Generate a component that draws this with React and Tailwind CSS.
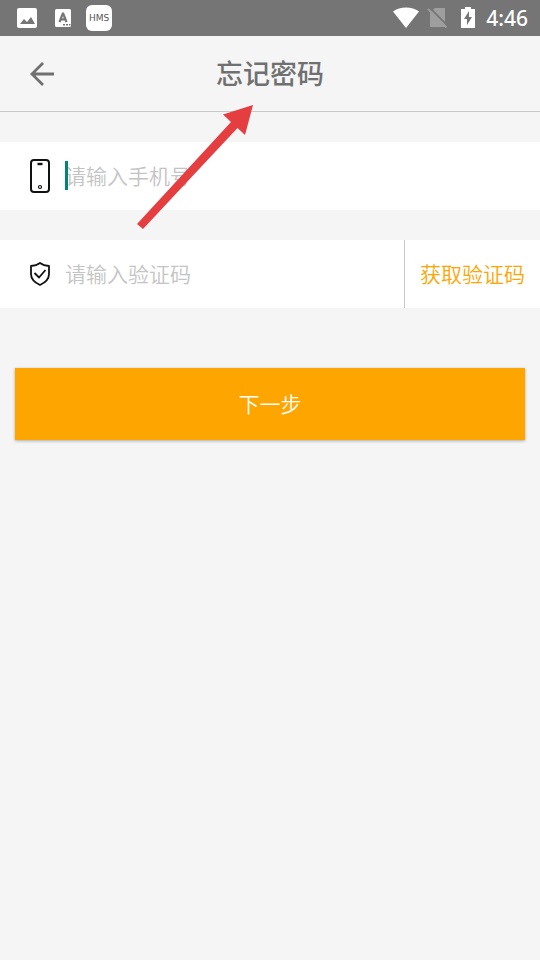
import { useState } from "react";

function StatusBar() {
  return (
    <div className="flex h-9 items-center justify-between bg-[#757575] pr-3 pl-4 text-white">
      <div className="flex items-center">
        <svg className="size-[22px]" viewBox="0 0 22 22" aria-hidden="true">
          <rect x="1" y="1" width="20" height="20" rx="2" fill="#fff" />
          <path d="M4 17l4-5 3 3 4-5 4 7z" fill="#757575" />
        </svg>
        <svg className="ml-4 size-[18px]" viewBox="0 0 18 18" aria-hidden="true">
          <rect x="1" y="0" width="16" height="18" rx="1.5" fill="#fff" />
          <path
            d="M5.500 13L8.800 4.500h0.400L12.500 13M6.500 10.300H11.500"
            fill="none"
            stroke="#757575"
            strokeWidth="2.200"
          />
          <path d="M9 15h2v1.500H9zM12 15h2v1.500h-2zM15 15h1.500v1.500H15z" fill="#757575" />
        </svg>
        <span className="ml-3.5 flex size-[26px] items-center justify-center rounded-md bg-white pt-0.5 font-['DejaVu_Sans',sans-serif] text-[9px] text-[#555]">
          HMS
        </span>
      </div>
      <div className="flex items-center">
        <svg className="h-[22px] w-[26px]" viewBox="0 0 26 22" aria-hidden="true">
          <path d="M0 4.500C7-1 19-1 26 4.500L13 21z" fill="#fff" />
        </svg>
        <svg className="ml-2 h-[22px] w-[22px]" viewBox="0 0 22 22" aria-hidden="true">
          <path d="M8 1h10v19H3V5z" fill="#9e9e9e" />
          <path d="M2.500 0.500l20 20" stroke="#757575" strokeWidth="1.800" />
          <path d="M1 2l18.500 18.500" stroke="#9e9e9e" strokeWidth="2" />
        </svg>
        <svg className="ml-3 h-[22px] w-[14px]" viewBox="0 0 14 22" aria-hidden="true">
          <path d="M4 0h6v2h4v19H0V2h4z" fill="#fff" />
          <path d="M8 4v6h3l-5 8v-6H3z" fill="#757575" />
        </svg>
        <time className="ml-[11px] font-['Noto_Sans',sans-serif] text-[21px] leading-6 font-medium">
          4:46
        </time>
      </div>
    </div>
  );
}

function PhoneIcon() {
  return (
    <svg className="h-[34px] w-5" viewBox="0 0 20 34" fill="none" stroke="#111" aria-hidden="true">
      <rect x="1" y="1" width="18" height="32" rx="3" strokeWidth="2" />
      <path d="M7.500 5h5" strokeWidth="2.400" />
      <circle cx="10" cy="28" r="1.500" strokeWidth="1.200" />
    </svg>
  );
}

function ShieldIcon() {
  return (
    <svg className="h-6 w-5" viewBox="0 0 20 24" fill="none" stroke="#111" aria-hidden="true">
      <path
        d="M10 1C7.500 3 4.500 3.800 1 4v8c0 5 4 8.700 9 11 5-2.300 9-6 9-11V4C15.500 3.800 12.500 3 10 1z"
        strokeWidth="1.800"
        strokeLinejoin="round"
      />
      <path d="M4.500 11l4.500 4.500 6.500-7.500" strokeWidth="1.800" />
    </svg>
  );
}

function Arrow() {
  return (
    <svg
      className="pointer-events-none absolute top-[104px] left-[136px] h-[126px] w-[118px]"
      viewBox="0 0 118 126"
      fill="#e53e41"
      aria-hidden="true"
    >
      <path d="M117 1L109 31L101.500 24L7 125L1 120L95 18L87 10.500z" />
    </svg>
  );
}

export default function App() {
  const [phone, setPhone] = useState("");
  const [code, setCode] = useState("");

  return (
    <div className="relative min-h-screen bg-[#f5f5f5] font-['Noto_Sans_CJK_SC',sans-serif]">
      <StatusBar />
      <header className="grid h-[76px] grid-cols-[1fr_auto_1fr] items-center border-b border-[#c8c8c8] px-[30px]">
        <button type="button" aria-label="返回" className="justify-self-start">
          <svg
            className="h-6 w-[25px]"
            viewBox="0 0 25 24"
            fill="none"
            stroke="#707070"
            strokeWidth="2.800"
            aria-hidden="true"
          >
            <path d="M24 12H3M13 1L2 12l11 11" />
          </svg>
        </button>
        <h1 className="pb-0.5 text-[27px] leading-10 font-medium text-[#707070]">忘记密码</h1>
      </header>

      <form onSubmit={(event) => event.preventDefault()}>
        <div className="mt-[30px] flex h-[68px] items-center bg-white pl-[30px]">
          <label htmlFor="phone" aria-label="手机号">
            <PhoneIcon />
          </label>
          <div className="relative ml-[15px] flex flex-1 items-center pb-0.5">
            <input
              id="phone"
              type="tel"
              value={phone}
              onChange={(event) => setPhone(event.target.value)}
              placeholder="请输入手机号"
              className="h-[66px] w-full min-w-0 text-[21px] font-[350] caret-[#008577] outline-none placeholder:text-[#c4c4c4]"
            />
            {phone === "" && (
              <span className="pointer-events-none absolute left-0 h-[29px] w-[3px] bg-[#008577]" />
            )}
          </div>
        </div>

        <div className="mt-[30px] flex h-[68px] items-center bg-white pl-[30px]">
          <label htmlFor="code" aria-label="验证码">
            <ShieldIcon />
          </label>
          <input
            id="code"
            type="text"
            value={code}
            onChange={(event) => setCode(event.target.value)}
            placeholder="请输入验证码"
            className="ml-[15px] h-[68px] min-w-0 flex-1 pb-0.5 text-[21px] font-[350] outline-none placeholder:text-[#c4c4c4]"
          />
          <button
            type="button"
            className="h-[68px] border-l border-[#c8c8c8] px-[15px] text-[21px] font-[350] text-[#ffa500]"
          >
            获取验证码
          </button>
        </div>

        <div className="mt-[60px] px-[15px]">
          <button
            type="submit"
            className="h-[72px] w-full bg-[#ffa500] text-[21px] font-[350] text-white shadow-[0_1px_3px_rgba(0,0,0,0.3)]"
          >
            下一步
          </button>
        </div>
      </form>
      <Arrow />
    </div>
  );
}
